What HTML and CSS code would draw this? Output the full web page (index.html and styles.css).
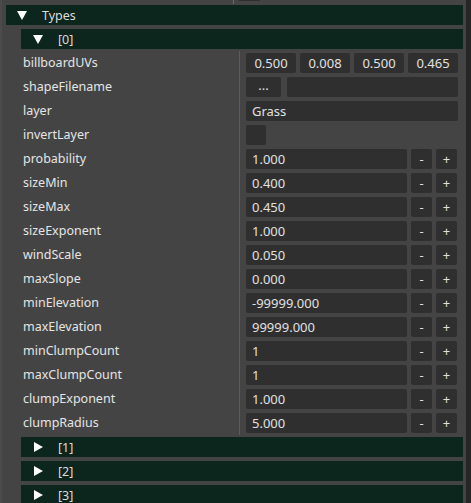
FILE: index.html
```html
<!DOCTYPE html>
<html lang="en">
<head>
    <meta charset="UTF-8">
    <title>Inspector</title>
    <link rel="stylesheet" href="styles.css">
</head>
<body>
    <div class="panel">
        <div class="tree">
            <div class="stub"><span class="stub-line"></span><span class="stub-box"></span></div>
            <div class="header top"><span class="arrow down"></span>Types</div>
            <div class="header sub"><span class="arrow down"></span>[0]</div>
            <div class="rows">
                <div class="row"><span class="label">billboardUVs</span>
                    <div class="value quad">
                        <span class="cell center">0.500</span><span class="cell center">0.008</span><span class="cell center">0.500</span><span class="cell center">0.465</span>
                    </div>
                </div>
                <div class="row"><span class="label">shapeFilename</span>
                    <div class="value file"><span class="cell center dots">...</span><span class="cell"></span></div>
                </div>
                <div class="row"><span class="label">layer</span>
                    <div class="value"><span class="cell">Grass</span></div>
                </div>
                <div class="row"><span class="label">invertLayer</span>
                    <div class="value"><span class="cell check"></span></div>
                </div>
            </div>
            <div class="rows" id="numeric"></div>
            <div class="header sub after"><span class="arrow right"></span>[1]</div>
            <div class="header sub"><span class="arrow right"></span>[2]</div>
            <div class="header sub"><span class="arrow right"></span>[3]</div>
        </div>
        <div class="scrollbar"></div>
    </div>

    <script>
        let fields = [
            ["probability", "1.000"], ["sizeMin", "0.400"], ["sizeMax", "0.450"],
            ["sizeExponent", "1.000"], ["windScale", "0.050"], ["maxSlope", "0.000"],
            ["minElevation", "-99999.000"], ["maxElevation", "99999.000"],
            ["minClumpCount", "1"], ["maxClumpCount", "1"],
            ["clumpExponent", "1.000"], ["clumpRadius", "5.000"]
        ];
        let numeric = document.getElementById("numeric");
        fields.forEach(function (f) {
            let row = document.createElement("div");
            row.className = "row";
            row.innerHTML = '<span class="label">' + f[0] + '</span>' +
                '<div class="value spin"><span class="cell">' + f[1] + '</span>' +
                '<span class="cell center btn">-</span><span class="cell center btn">+</span></div>';
            numeric.appendChild(row);
        });
    </script>
</body>
</html>
```

FILE: styles.css
```css
* { box-sizing: border-box; }
body { margin: 0; background: #444444; font-family: "Noto Sans", "Open Sans", sans-serif; font-size: 12.5px; color: #e4e4e4; overflow: hidden; }
.panel { display: flex; width: 471px; height: 503px; border-left: 2px solid #4b4b4b; }
.tree { width: 464px; flex: none; padding-left: 4px; padding-right: 3px; }
.scrollbar { width: 5px; flex: none; background: #262626; }

.stub { height: 5px; position: relative; }
.stub-line { position: absolute; left: 227px; top: 0; width: 1px; height: 4px; background: #6a6a6a; }
.stub-box { position: absolute; left: 233px; top: 0; width: 21px; height: 1px; background: #2f2f2f; }

.header { height: 20px; background: #0c261d; display: flex; align-items: center; color: #dcdcdc; margin-bottom: 4px; }
.header.top { padding-left: 11px; }
.header.sub { margin-left: 15px; padding-left: 12px; }
.header.after { margin-top: 2px; }
.header.sub:not(.after) + .rows { margin-top: -2px; }

.arrow { width: 0; height: 0; margin-right: 15px; }
.arrow.down { border-left: 5px solid transparent; border-right: 5px solid transparent; border-top: 9px solid #ffffff; }
.arrow.right { border-top: 5px solid transparent; border-bottom: 5px solid transparent; border-left: 9px solid #ffffff; margin-left: 1px; }

.row { display: flex; height: 24px; }
.label { width: 233px; flex: none; padding-left: 17px; line-height: 24px; white-space: nowrap; }
.value { width: 219px; flex: none; border-left: 1px solid #5c5c5c; padding: 2px 0 2px 6px; display: flex; gap: 4px; }
.cell { height: 20px; line-height: 20px; background: #2f2f2f; border-radius: 2px; padding: 0 6px; flex: 1; color: #e0e0e0; font-size: 13px; }
.center { text-align: center; padding: 0; }
.quad .cell { flex: 0 0 50px; }
.file { gap: 6px; }
.file .dots { flex: 0 0 35px; line-height: 16px; }
.check { flex: 0 0 20px; padding: 0; }
.spin .cell { flex: 0 0 161px; }
.spin .btn { flex: 0 0 21px; padding: 0; }
```
